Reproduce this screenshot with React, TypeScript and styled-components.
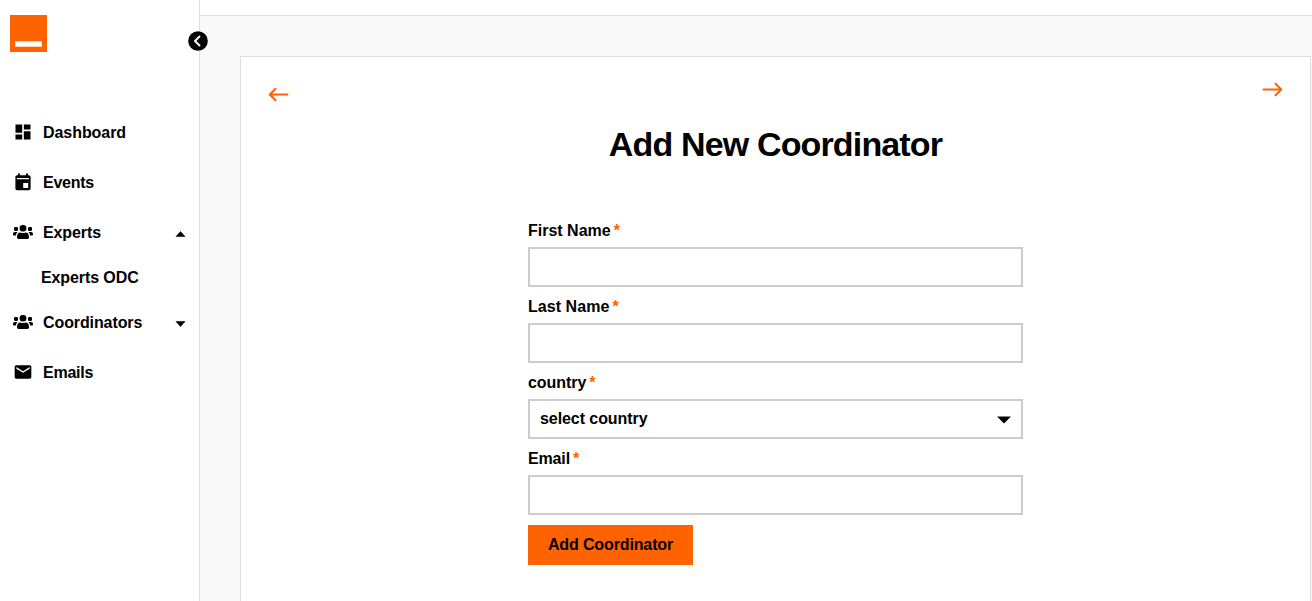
import React from "react";
import styled, { createGlobalStyle } from "styled-components";
import { MdDashboard, MdEmail } from "react-icons/md";

const Global = createGlobalStyle`
  *, *::before, *::after { box-sizing: border-box; }
  body {
    margin: 0;
    overflow: hidden;
    background: #fff;
    color: #000;
    font: bold 16px/20px "Liberation Sans", Arial, sans-serif;
  }
`;

const Shell = styled.div`
  display: flex;
  height: 601px;
`;
const Sidebar = styled.aside`
  position: relative;
  flex: 0 0 200px;
  border-right: 1px solid #ddd;
  padding: 15px 0 0;
`;
const Logo = styled.div`
  display: flex;
  align-items: flex-end;
  width: 37px;
  height: 37px;
  margin-left: 10px;
  padding: 5px;
  background: #ff6200;
`;
const LogoBar = styled.div`
  width: 27px;
  height: 6px;
  background: #fff;
  border: 1px solid #ffd0b3;
`;
const Collapse = styled.button`
  position: absolute;
  top: 31px;
  right: -9px;
  width: 20px;
  height: 20px;
  padding: 0;
  border: 0;
  background: none;
  svg { display: block; }
`;
const Nav = styled.nav`
  margin-top: 55px;
`;
const NavRow = styled.a`
  display: flex;
  align-items: center;
  height: 50px;
  padding: 0 13px;
`;
const NavIcon = styled.span`
  display: flex;
  width: 20px;
  margin-right: 10px;
`;
const NavText = styled.span<{ $track?: number }>`
  flex: 1;
  padding-top: 2px;
  letter-spacing: ${(p) => p.$track ?? -0.1}px;
`;
const SubRow = styled.a`
  display: flex;
  align-items: center;
  height: 40px;
  padding: 2px 0 0 41px;
  letter-spacing: -0.1px;
`;
const Caret = styled.svg`
  display: block;
  margin-top: 4px;
`;
const Main = styled.main`
  flex: 1;
  display: flex;
  flex-direction: column;
  background: #f9f9f9;
`;
const TopBar = styled.header`
  flex: 0 0 16px;
  background: #fff;
  border-bottom: 1px solid #ddd;
`;
const Panel = styled.section`
  flex: 1;
  margin: 40px 1px 0 40px;
  border: 1px solid #ddd;
  border-bottom: 0;
  background: #fff;
`;
const Arrows = styled.div`
  display: flex;
  justify-content: space-between;
  height: 60px;
  padding: 25px 27px 0;
`;
const ArrowIcon = styled.svg<{ $drop?: number }>`
  margin-top: ${(p) => p.$drop ?? 0}px;
  fill: none;
  stroke: #ff6200;
  stroke-width: 2;
  stroke-linecap: round;
  stroke-linejoin: round;
`;
const Title = styled.h1`
  margin: 7px 0 0;
  font-size: 34px;
  line-height: 40px;
  letter-spacing: -0.85px;
  text-align: center;
`;
const Form = styled.form`
  width: 495px;
  margin: 57px auto 0;
`;
const Field = styled.div`
  margin-bottom: 10px;
`;
const Label = styled.label<{ $track?: number }>`
  display: flex;
  height: 20px;
  margin-bottom: 6px;
  letter-spacing: ${(p) => p.$track ?? -0.05}px;
`;
const Star = styled.span`
  margin-left: 3px;
  color: #ff6200;
`;
const Input = styled.input`
  display: block;
  width: 100%;
  height: 40px;
  border: 2px solid #ccc;
  background: #fff;
  font: inherit;
`;
const Select = styled.div`
  display: flex;
  align-items: center;
  justify-content: space-between;
  height: 40px;
  padding: 0 10px;
  border: 2px solid #ccc;
  letter-spacing: -0.07px;
  svg { margin-top: 1px; }
`;
const Submit = styled.button`
  display: block;
  width: 165px;
  height: 40px;
  padding: 0;
  border: 0;
  background: #ff6200;
  color: #000;
  font: inherit;
  letter-spacing: -0.13px;
`;

const Up = () => (
  <Caret width="11" height="6" viewBox="0 0 11 6"><path d="M5.5.5 10 5.6H1z" stroke="#000" strokeWidth=".6" /></Caret>
);
const Down = () => (
  <Caret width="11" height="6" viewBox="0 0 11 6"><path d="M1 .5h9L5.5 5.6z" stroke="#000" strokeWidth=".6" /></Caret>
);
const EventIcon = () => (
  <svg width="20" height="20" viewBox="0 0 20 20">
    <path
      fillRule="evenodd"
      d="M5 1.5h2v1.7h6V1.5h2v1.7h1a1.6 1.6 0 0 1 1.6 1.6v11.8a1.6 1.6 0 0 1-1.6 1.6H4a1.6 1.6 0 0 1-1.6-1.6V4.8A1.6 1.6 0 0 1 4 3.200h1zM4 6v1.300h12V6zM10.200 11v5h5v-5z"
    />
  </svg>
);
const PeopleIcon = () => (
  <svg width="20" height="20" viewBox="0 0 20 20">
    <rect x="1" y="5" width="4" height="4" rx="1.200" />
    <rect x="15" y="5" width="4" height="4" rx="1.200" />
    <rect x="6.600" y="3" width="6.800" height="6.600" rx="3" />
    <path d="M4 15.300c0-3 1.200-4.900 3.400-4.900 1 .5 1.700.7 2.600.7s1.600-.2 2.600-.7c2.200 0 3.400 1.900 3.400 4.900 0 1.100-.6 1.700-1.600 1.700H5.600C4.600 17 4 16.400 4 15.300z" />
    <path d="M0 12.200C0 10.800.8 10 2 10h2.600c-1 .9-1.500 2-1.700 3.500H.8c-.5 0-.8-.3-.8-.8zM20 12.200c0-1.400-.8-2.200-2-2.200h-2.600c1 .9 1.500 2 1.700 3.500h2.100c.5 0 .8-.3.800-.8z" />
  </svg>
);

export default function App() {
  return (
    <>
      <Global />
      <Shell>
        <Sidebar>
          <Logo><LogoBar /></Logo>
          <Collapse aria-label="Collapse menu">
            <svg width="20" height="20" viewBox="0 0 20 20">
              <circle cx="10" cy="10" r="9.800" />
              <path d="M11.500 5.500 7 10l4.500 4.500" fill="none" stroke="#fff" strokeWidth="1.900" strokeLinecap="round" strokeLinejoin="round" />
            </svg>
          </Collapse>
          <Nav>
            <NavRow><NavIcon><MdDashboard size={20} /></NavIcon><NavText $track={-0.06}>Dashboard</NavText></NavRow>
            <NavRow><NavIcon><EventIcon /></NavIcon><NavText $track={-0.25}>Events</NavText></NavRow>
            <NavRow><NavIcon><PeopleIcon /></NavIcon><NavText>Experts</NavText><Up /></NavRow>
            <SubRow>Experts ODC</SubRow>
            <NavRow><NavIcon><PeopleIcon /></NavIcon><NavText>Coordinators</NavText><Down /></NavRow>
            <NavRow><NavIcon><MdEmail size={20} /></NavIcon><NavText $track={-0.25}>Emails</NavText></NavRow>
          </Nav>
        </Sidebar>
        <Main>
          <TopBar />
          <Panel>
            <Arrows>
              <ArrowIcon $drop={5} width="21" height="15" viewBox="0 0 21 15"><path d="M19.500 7.500H2M7.500 1.800 1.800 7.500l5.700 5.700" /></ArrowIcon>
              <ArrowIcon width="21" height="15" viewBox="0 0 21 15"><path d="M1.500 7.500H19M13.500 1.800l5.700 5.700-5.700 5.700" /></ArrowIcon>
            </Arrows>
            <Title>Add New Coordinator</Title>
            <Form>
              <Field><Label $track={0}>First Name<Star>*</Star></Label><Input /></Field>
              <Field><Label $track={0.05}>Last Name<Star>*</Star></Label><Input /></Field>
              <Field>
                <Label>country<Star>*</Star></Label>
                <Select>
                  select country
                  <svg width="14" height="8" viewBox="0 0 14 8"><path d="M0 .5h14l-7 7z" /></svg>
                </Select>
              </Field>
              <Field><Label $track={-0.15}>Email<Star>*</Star></Label><Input /></Field>
              <Submit type="button">Add Coordinator</Submit>
            </Form>
          </Panel>
        </Main>
      </Shell>
    </>
  );
}
